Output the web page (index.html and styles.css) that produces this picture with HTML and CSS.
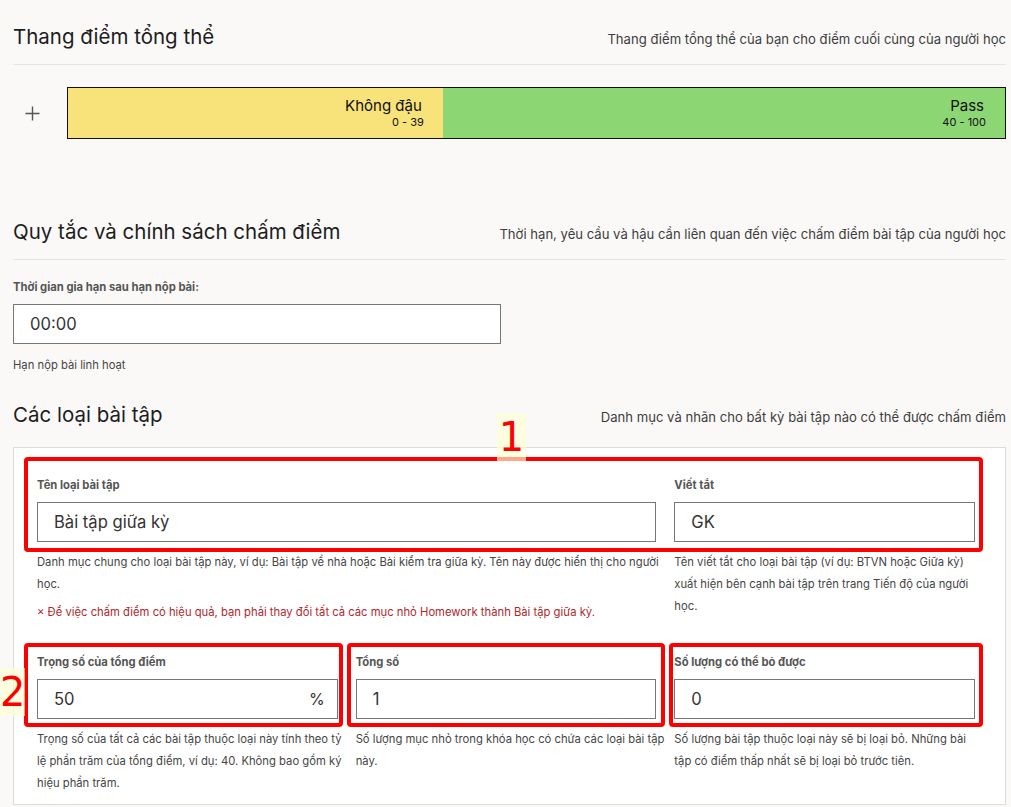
FILE: index.html
```html
<!DOCTYPE html>
<html lang="vi">
<head>
    <meta charset="UTF-8">
    <meta name="viewport" content="width=device-width, initial-scale=1.0">
    <title>Chấm điểm</title>
    <link rel="stylesheet" href="styles.css">
</head>
<body>
    <section class="section first">
        <header class="section-head">
            <h2>Thang điểm tổng thể</h2>
            <p>Thang điểm tổng thể của bạn cho điểm cuối cùng của người học</p>
        </header>
        <div class="scale">
            <button class="scale-add" title="Thêm">
                <svg width="15" height="15" viewBox="0 0 15 15"><path d="M7.5 0.5v14M0.5 7.5h14" stroke="#555" stroke-width="1.4" fill="none"/></svg>
            </button>
            <div class="scale-bar">
                <div class="grade fail" style="width: 40%">
                    <span class="grade-name">Không đậu</span>
                    <span class="grade-range">0 - 39</span>
                </div>
                <div class="grade pass">
                    <span class="grade-name">Pass</span>
                    <span class="grade-range">40 - 100</span>
                </div>
            </div>
        </div>
    </section>

    <section class="section rules">
        <header class="section-head">
            <h2>Quy tắc và chính sách chấm điểm</h2>
            <p>Thời hạn, yêu cầu và hậu cần liên quan đến việc chấm điểm bài tập của người học</p>
        </header>
        <div class="field grace">
            <label class="field-label">Thời gian gia hạn sau hạn nộp bài:</label>
            <div class="input">00:00</div>
            <p class="help">Hạn nộp bài linh hoạt</p>
        </div>
    </section>

    <section class="section types">
        <header class="section-head plain">
            <h2>Các loại bài tập</h2>
            <p>Danh mục và nhãn cho bất kỳ bài tập nào có thể được chấm điểm</p>
        </header>
        <div class="types-card">
            <div class="type-row">
                <div class="mark mark-row"><span class="badge badge-1">1</span></div>
                <div class="field span-2">
                    <label class="field-label">Tên loại bài tập</label>
                    <div class="input">Bài tập giữa kỳ</div>
                    <p class="help">Danh mục chung cho loại bài tập này, ví dụ: Bài tập về nhà hoặc Bài kiểm tra giữa kỳ. Tên này được hiển thị cho người học.</p>
                    <p class="help error">× Để việc chấm điểm có hiệu quả, bạn phải thay đổi tất cả các mục nhỏ Homework thành Bài tập giữa kỳ.</p>
                </div>
                <div class="field">
                    <label class="field-label">Viết tắt</label>
                    <div class="input">GK</div>
                    <p class="help">Tên viết tắt cho loại bài tập (ví dụ: BTVN hoặc Giữa kỳ) xuất hiện bên cạnh bài tập trên trang Tiến độ của người học.</p>
                </div>
            </div>
            <div class="type-row second">
                <div class="field">
                    <div class="mark mark-a"><span class="badge badge-2">2</span></div>
                    <label class="field-label">Trọng số của tổng điểm</label>
                    <div class="input">50<span class="unit">%</span></div>
                    <p class="help">Trọng số của tất cả các bài tập thuộc loại này tính theo tỷ lệ phần trăm của tổng điểm, ví dụ: 40. Không bao gồm ký hiệu phần trăm.</p>
                </div>
                <div class="field">
                    <div class="mark mark-b"></div>
                    <label class="field-label">Tổng số</label>
                    <div class="input">1</div>
                    <p class="help">Số lượng mục nhỏ trong khóa học có chứa các loại bài tập này.</p>
                </div>
                <div class="field">
                    <div class="mark mark-c"></div>
                    <label class="field-label">Số lượng có thể bỏ được</label>
                    <div class="input">0</div>
                    <p class="help">Số lượng bài tập thuộc loại này sẽ bị loại bỏ. Những bài tập có điểm thấp nhất sẽ bị loại bỏ trước tiên.</p>
                </div>
            </div>
        </div>
    </section>
</body>
</html>
```

FILE: styles.css
```css
body {
    margin: 0;
    padding: 0 5px 0 13px;
    background: #faf9f8;
    font-family: 'Inter', 'Noto Sans', sans-serif;
    color: #222;
}

/* section headers */

.section-head {
    display: flex;
    justify-content: space-between;
    align-items: baseline;
    padding-bottom: 13px;
    border-bottom: 1px solid #e5e4e2;
}

.section-head h2 {
    margin: 0;
    font-size: 20.5px;
    line-height: 28px;
    font-weight: 400;
    color: #1d1d1d;
}

.section-head p {
    margin: 0;
    font-size: 13.1px;
    line-height: 18px;
    color: #3d3d3d;
}

.section-head.plain {
    border-bottom: none;
    padding-bottom: 0;
    margin-bottom: 18px;
}

.first {
    padding-top: 23px;
}

.rules {
    margin-top: 79px;
}

.types {
    margin-top: 27px;
}

/* grading scale */

.scale {
    display: flex;
    align-items: center;
    margin-top: 22px;
}

.scale-add {
    width: 38px;
    margin-right: 16px;
    padding: 0;
    border: none;
    background: none;
    display: flex;
    justify-content: center;
    cursor: pointer;
}

.scale-bar {
    flex: 1;
    display: flex;
    height: 52px;
    box-sizing: border-box;
    border: 1px solid #111;
}

.grade {
    display: flex;
    flex-direction: column;
    align-items: flex-end;
    padding: 8px 19px 0;
    box-sizing: border-box;
    color: #111;
}

.grade.fail {
    background: #f8e27a;
}

.grade.pass {
    flex: 1;
    background: #8cd674;
}

.grade-name {
    font-size: 15px;
    line-height: 19px;
    padding-right: 2px;
}

.grade-range {
    font-size: 11px;
    line-height: 14px;
}

/* fields */

.field {
    position: relative;
    display: flex;
    flex-direction: column;
}

.field-label {
    font-size: 11.25px;
    line-height: 16px;
    font-weight: 700;
    color: #555;
    margin-bottom: 9px;
}

.input {
    display: flex;
    align-items: center;
    justify-content: space-between;
    height: 40px;
    box-sizing: border-box;
    padding: 0 12px 0 16px;
    border: 1px solid #777;
    background: #fff;
    font-size: 16.6px;
    color: #333;
}

.unit {
    font-size: 16px;
}

.help {
    margin: 9px -10px 0 0;
    font-size: 11.25px;
    line-height: 22px;
    color: #454545;
}

.help.error {
    margin-top: 6px;
    color: #b0282c;
}

.grace {
    margin-top: 19px;
    width: 488px;
}

.grace .help {
    margin-top: 12px;
    line-height: 18px;
}

/* assignment types */

.types-card {
    border: 1px solid #dcdcdc;
    background: #fff;
    padding: 29px 30px 10px 23px;
}

.type-row {
    position: relative;
    display: grid;
    grid-template-columns: repeat(3, 1fr);
    column-gap: 18px;
}

.type-row.second {
    margin-top: 31px;
}

.span-2 {
    grid-column: span 2;
}

/* red annotation frames */

.mark {
    position: absolute;
    border: 4px solid #f00;
    border-radius: 4px;
    box-sizing: border-box;
    pointer-events: none;
}

.mark-row {
    top: -20px;
    left: -13px;
    right: -8px;
    height: 95px;
}

.mark-a,
.mark-b,
.mark-c {
    top: -11px;
    height: 84px;
}

.mark-a {
    left: -13px;
    right: -5px;
}

.mark-b {
    left: -9px;
    right: -9px;
}

.mark-c {
    left: -5px;
    right: -8px;
}

.badge {
    position: absolute;
    height: 48px;
    background: rgba(255, 255, 210, 0.65);
    color: #f00;
    font-family: 'DejaVu Sans', sans-serif;
    font-size: 40px;
    line-height: 48px;
    text-align: center;
}

.badge-1 {
    top: -48px;
    left: 469px;
    width: 29px;
}

.badge-2 {
    top: 21px;
    left: -28px;
    width: 25px;
}
```
